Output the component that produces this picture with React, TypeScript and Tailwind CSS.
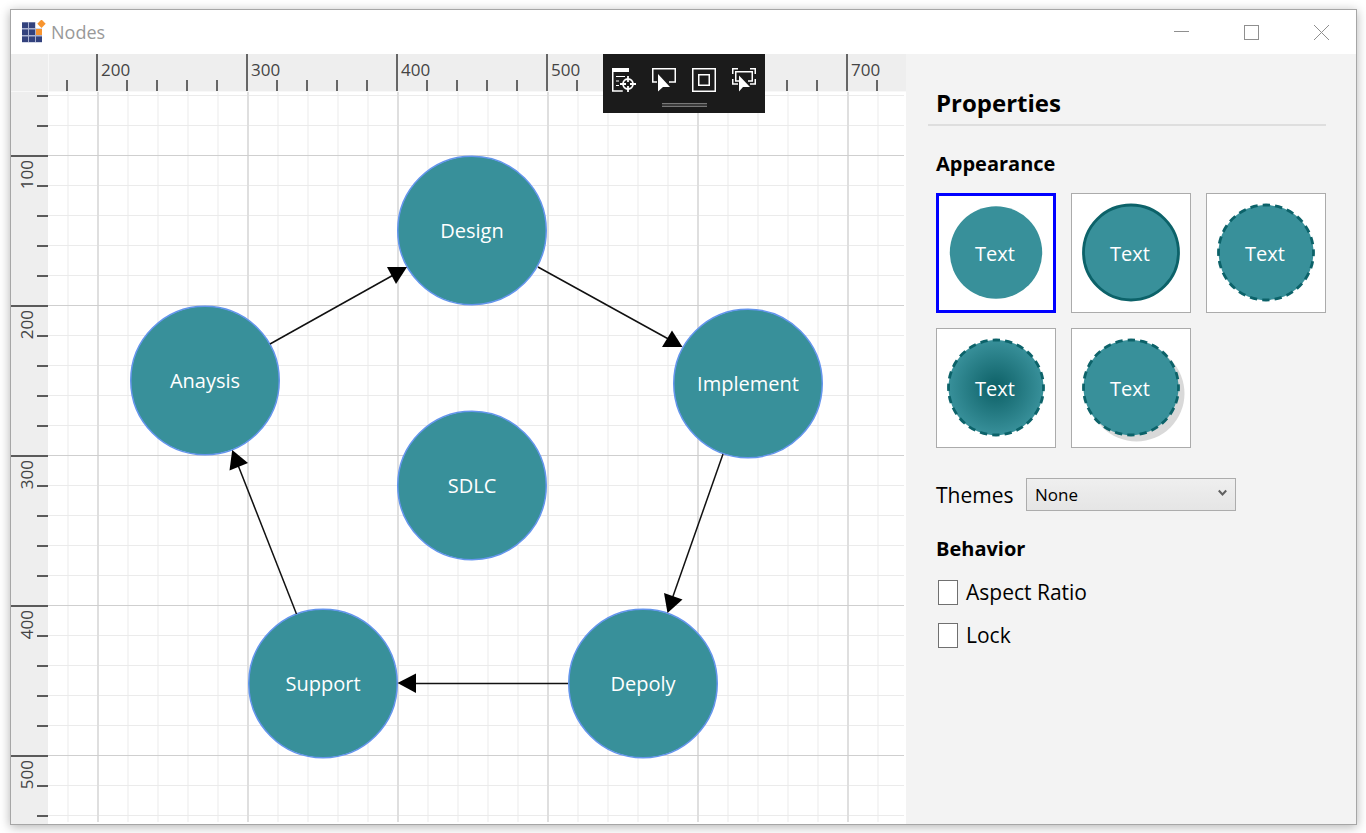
const canvasNodes = [
  { label: "Design", x: 349, y: 64 },
  { label: "Anaysis", x: 82, y: 214 },
  { label: "Implement", x: 625, y: 217 },
  { label: "SDLC", x: 349, y: 319 },
  { label: "Support", x: 200, y: 517 },
  { label: "Depoly", x: 520, y: 517 },
];

const connectors = [
  { line: "M490 175 L624 249", head: "M634.500 255 L624 238.500 L614 255 Z" },
  { line: "M222 252 L349 181", head: "M359 175 L339 175 L348 192 Z" },
  { line: "M675 362 L623 510", head: "M619.500 521 L616 501 L634.500 507.500 Z" },
  { line: "M520 591.500 L360 591.500", head: "M349.500 591 L368 581.500 L368 601 Z" },
  { line: "M248.500 522 L188 368", head: "M184.200 358 L181.500 378.500 L200 371 Z" },
];

const gridPaths = {
  minorX: Array.from({ length: 60 }, (_, i) => 20 + i * 30).filter((x) => (x - 50) % 150 !== 0),
  majorX: Array.from({ length: 12 }, (_, i) => 50 + i * 150),
  minorY: Array.from({ length: 60 }, (_, i) => 3 + i * 30).filter((y) => (y - 63) % 150 !== 0),
  majorY: Array.from({ length: 12 }, (_, i) => 63 + i * 150),
};

function Logo() {
  return (
    <svg width="24" height="24" viewBox="0 0 24 24" aria-hidden="true">
      <rect y="2" width="20" height="20.500" fill="#a9b1cf" />
      <rect x="13.500" width="8" height="8.500" fill="#fff" />
      <g fill="#33427d">
        <rect y="2.500" width="6" height="5.500" />
        <rect x="7" y="2.500" width="6" height="5.500" />
        <rect y="9.500" width="6" height="5.500" />
        <rect x="7" y="9.500" width="6" height="5.500" />
        <rect y="16.500" width="6" height="5.500" />
        <rect x="7" y="16.500" width="6" height="5.500" />
        <rect x="14" y="16.500" width="6" height="5.500" />
      </g>
      <rect x="14" y="9" width="6" height="6" fill="#f7942f" />
      <path d="M19.500 -0.500 L23.700 3.700 L19.500 7.900 L15.300 3.700 Z" fill="#f7942f" />
    </svg>
  );
}

function TitleBar() {
  const button = "flex h-full w-[70px] items-center justify-center text-[#8f8f8f]";
  return (
    <header className="flex h-11 shrink-0 items-center bg-white pl-[11px]">
      <Logo />
      <h1 className="ml-[5px] text-[18px] leading-6 text-[#999]">Nodes</h1>
      <div className="ml-auto flex h-full">
        <button className={button} aria-label="Minimize">
          <svg width="15" height="15" viewBox="0 0 15 15"><path d="M0 6.500h15" stroke="currentColor" /></svg>
        </button>
        <button className={button} aria-label="Maximize">
          <svg width="15" height="15" viewBox="0 0 15 15" fill="none"><rect x=".5" y=".5" width="14" height="14" stroke="currentColor" /></svg>
        </button>
        <button className={button} aria-label="Close">
          <svg width="15" height="15" viewBox="0 0 15 15"><path d="M0 0l15 15M15 0L0 15" stroke="currentColor" /></svg>
        </button>
      </div>
    </header>
  );
}

function HorizontalRuler() {
  return (
    <div className="flex h-[37px] min-w-0 flex-1 overflow-hidden border-l border-[#f8f8f8] bg-[#eee] text-[#444]">
      <div className="flex w-[47px] shrink-0 items-end pl-[17px]">
        <i className="h-[11px] w-0.5 bg-[#666]" />
      </div>
      {[200, 300, 400, 500, 600, 700].map((value) => (
        <div key={value} className="grid w-[150px] shrink-0 border-l-2 border-[#666]">
          <span className="col-start-1 row-start-1 pt-1 pl-[3px] text-[17px] leading-6">{value}</span>
          <div className="col-start-1 row-start-1 flex items-end gap-7 pl-7">
            {[1, 2, 3, 4].map((tick) => (
              <i key={tick} className="h-[11px] w-0.5 bg-[#666]" />
            ))}
          </div>
        </div>
      ))}
    </div>
  );
}

function VerticalRuler() {
  return (
    <div className="w-[37px] shrink-0 overflow-hidden bg-[#eee] text-[#444]">
      <div className="flex h-[63px] flex-col items-end gap-7 pt-[3px]">
        <i className="h-0.5 w-[11px] bg-[#5a5a5a]" />
        <i className="h-0.5 w-[11px] bg-[#5a5a5a]" />
      </div>
      {[100, 200, 300, 400, 500].map((value) => (
        <div key={value} className="grid h-[150px] border-t-2 border-[#5a5a5a]">
          <span className="col-start-1 row-start-1 mt-[3px] ml-1 h-max w-6 rotate-180 text-[17px] leading-6 [writing-mode:vertical-rl]">{value}</span>
          <div className="col-start-1 row-start-1 flex flex-col items-end gap-7 pt-7">
            {[1, 2, 3, 4].map((tick) => (
              <i key={tick} className="h-0.5 w-[11px] bg-[#5a5a5a]" />
            ))}
          </div>
        </div>
      ))}
    </div>
  );
}

function Canvas() {
  const lines = (xs: number[]) => xs.map((x) => `M${x} 0V2000`).join("");
  const rows = (ys: number[]) => ys.map((y) => `M0 ${y + 0.5}H3000`).join("");
  return (
    <div className="relative min-w-0 flex-1 overflow-hidden bg-white pr-0.5 pb-0.5">
      <svg className="block h-full w-full" fill="none" aria-hidden="true">
        <path d={lines(gridPaths.minorX)} stroke="#f5f5f5" strokeWidth="2" />
        <path d={rows(gridPaths.minorY)} stroke="#ebebeb" />
        <path d={lines(gridPaths.majorX)} stroke="#dfdfdf" strokeWidth="2" />
        <path d={rows(gridPaths.majorY)} stroke="#cfcfcf" />
        {canvasNodes.map((node) => (
          <circle key={node.label} cx={node.x + 75} cy={node.y + 74.5} r="74.250" fill="#38909a" stroke="#6495ed" strokeWidth="1.500" />
        ))}
        {connectors.map((c) => (
          <g key={c.line}>
            <path d={c.line} stroke="#111" strokeWidth="1.500" />
            <path d={c.head} fill="#000" />
          </g>
        ))}
      </svg>
      {canvasNodes.map((node) => (
        <div
          key={node.label}
          className="absolute flex size-[150px] items-center justify-center rounded-full text-[20px] leading-6 font-medium text-white"
          style={{ left: node.x, top: node.y }}
        >
          {node.label}
        </div>
      ))}
    </div>
  );
}

function DebugToolbar() {
  const button = "flex size-6 items-center justify-center text-white";
  return (
    <div className="absolute top-0 left-[592px] flex h-[59px] w-[162px] flex-col items-center bg-[#1b1b1b] pt-[14px]">
      <div className="flex gap-4">
        <button className={button} aria-label="Go to live visual tree">
          <svg width="24" height="24" viewBox="0 0 24 24" fill="none" stroke="currentColor">
            <path d="M0 0h17v4H0z" fill="currentColor" stroke="none" />
            <path d="M.75 3v20h10" strokeWidth="1.500" />
            <path d="M4 8.500h9M4 13h3M4 17.500h3" strokeWidth="1.200" />
            <circle cx="16" cy="16" r="5" strokeWidth="1.800" />
            <path d="M16 8v6M16 18v6M8 16h6M18 16h6" strokeWidth="1.800" />
          </svg>
        </button>
        <button className={button} aria-label="Select element">
          <svg width="24" height="24" viewBox="0 0 24 24" fill="none" stroke="currentColor">
            <path d="M5 14H.75V.75h22.500V14H17" strokeWidth="1.500" />
            <path d="M6 6v17.500l5-4.500h7z" fill="currentColor" stroke="none" />
          </svg>
        </button>
        <button className={button} aria-label="Display layout adorners">
          <svg width="24" height="24" viewBox="0 0 24 24" fill="none" stroke="currentColor" strokeWidth="1.500">
            <rect x=".75" y=".75" width="22.500" height="22.500" />
            <rect x="6.750" y="6.750" width="10.500" height="10.500" />
          </svg>
        </button>
        <button className={button} aria-label="Track focused element">
          <svg width="24" height="24" viewBox="0 0 24 24" fill="none" stroke="currentColor" strokeWidth="1.500">
            <path d="M.75 6V.75H6M18 .75h5.250V6M.75 11v5H6M18 16h5.250v-5" />
            <path d="M7 13H3.750V3.750h16.500V13H16" />
            <path d="M7 7.500v16l4-4.500h7z" fill="currentColor" stroke="none" />
          </svg>
        </button>
      </div>
      <div className="mt-[11px] h-1 w-[45px] border-y border-[#777] bg-[#3a3a3a]" />
    </div>
  );
}

type Variant = "plain" | "outline" | "dashed" | "gradient" | "shadow";

function StyleTile({ variant, selected }: { variant: Variant; selected?: boolean }) {
  const dashed = variant === "dashed" || variant === "gradient" || variant === "shadow";
  return (
    <button
      aria-label={`Text, ${variant} style`}
      aria-pressed={!!selected}
      className={
        selected
          ? "grid size-[120px] place-items-center border-3 border-[#0000ff] bg-white"
          : "grid size-[120px] place-items-center border border-[#ababab] bg-white"
      }
    >
      <svg className="col-start-1 row-start-1" width="112" height="112" viewBox="0 0 112 112" aria-hidden="true">
        <defs>
          <radialGradient id="tile-glow">
            <stop offset="0" stopColor="#0d6066" />
            <stop offset="1" stopColor="#38909a" />
          </radialGradient>
        </defs>
        {variant === "shadow" && <circle cx="61.500" cy="61.500" r="48" fill="#d9d9d9" />}
        <circle
          cx="56"
          cy="55.500"
          r={variant === "plain" ? 46.2 : 47.5}
          fill={variant === "gradient" ? "url(#tile-glow)" : "#38909a"}
          stroke={variant === "plain" ? "none" : "#0c6269"}
          strokeWidth="2.800"
          strokeDasharray={dashed ? "7.4 5.035" : undefined}
          strokeDashoffset={dashed ? 3.7 : undefined}
        />
      </svg>
      <span className="col-start-1 row-start-1 pt-0.5 pr-0.5 text-[20px] leading-6 font-medium text-white">Text</span>
    </button>
  );
}

function CheckRow({ id, label }: { id: string; label: string }) {
  return (
    <div className="flex items-center gap-2">
      <input id={id} type="checkbox" className="ml-0.5 h-[25px] w-5 appearance-none border border-[#707070] bg-white checked:bg-[#38909a]" />
      <label htmlFor={id} className="text-[21px] leading-7">{label}</label>
    </div>
  );
}

function PropertiesPanel() {
  return (
    <aside className="w-[450px] shrink-0 bg-[#f3f3f3] pt-8 pr-[30px] pl-[30px] text-black">
      <h2 className="-ml-2 border-b-2 border-[#dedede] pb-1 pl-2 text-[24px] leading-[34px] font-bold">Properties</h2>
      <h3 className="mt-6 text-[20px] leading-7 font-bold">Appearance</h3>
      <div className="mt-[15px] flex flex-wrap gap-[15px]">
        <StyleTile variant="plain" selected />
        <StyleTile variant="outline" />
        <StyleTile variant="dashed" />
        <StyleTile variant="gradient" />
        <StyleTile variant="shadow" />
      </div>
      <div className="mt-[30px] flex items-center">
        <label htmlFor="themes" className="w-[90px] text-[21px] leading-7">Themes</label>
        <div className="grid w-[210px] items-center">
          <select id="themes" className="col-start-1 row-start-1 h-[33px] appearance-none border border-[#acacac] bg-linear-to-b from-[#efefef] to-[#e5e5e5] px-2 text-[17px]">
            <option>None</option>
          </select>
          <svg className="pointer-events-none col-start-1 row-start-1 mr-[9px] mb-1 justify-self-end" width="9" height="8" viewBox="0 0 9 8" fill="none" aria-hidden="true">
            <path d="M.8 1.500L4.500 5.500L8.200 1.500" stroke="#606060" strokeWidth="2" />
          </svg>
        </div>
      </div>
      <h3 className="mt-6 text-[20px] leading-7 font-bold">Behavior</h3>
      <div className="mt-[15px] flex flex-col gap-[15px]">
        <CheckRow id="aspect" label="Aspect Ratio" />
        <CheckRow id="lock" label="Lock" />
      </div>
    </aside>
  );
}

export default function App() {
  return (
    <div className="flex h-screen flex-col bg-white pt-[9px] pr-[9px] pb-2 pl-[10px] font-['Open_Sans','Noto_Sans',sans-serif]">
      <div className="flex min-h-0 flex-1 flex-col border border-[#a6a6a6] bg-white shadow-[0_2px_10px_rgba(0,0,0,0.3)]">
        <TitleBar />
        <main className="flex min-h-0 flex-1">
          <section className="relative flex min-w-0 flex-1 flex-col" aria-label="Diagram">
            <div className="flex">
              <div className="w-[37px] shrink-0 bg-[#eee]" />
              <HorizontalRuler />
            </div>
            <div className="flex min-h-0 flex-1 border-t border-[#f8f8f8]">
              <VerticalRuler />
              <Canvas />
            </div>
            <DebugToolbar />
          </section>
          <PropertiesPanel />
        </main>
      </div>
    </div>
  );
}
